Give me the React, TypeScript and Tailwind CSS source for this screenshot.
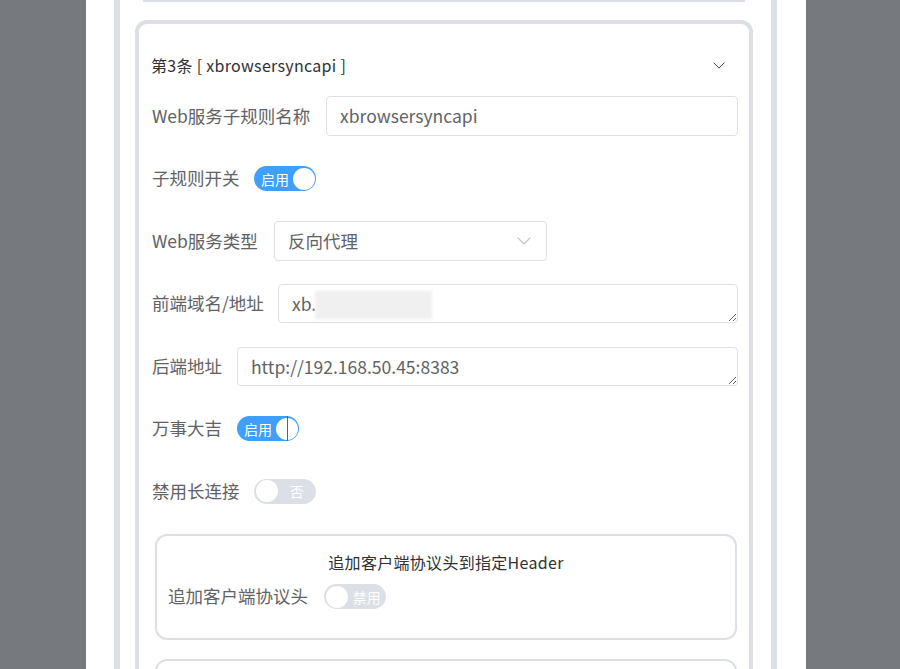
import clsx from "clsx";

function Chevron({ className }: { className?: string }) {
  return (
    <svg viewBox="0 0 14 8" className={className} fill="none" aria-hidden="true">
      <path d="M1 1l6 6 6-6" stroke="currentColor" strokeWidth="1.1" strokeLinecap="round" strokeLinejoin="round" />
    </svg>
  );
}

function Switch({ on, text, caret }: { on: boolean; text: string; caret?: boolean }) {
  if (on) {
    return (
      <div className="relative flex h-[25px] w-[62px] shrink-0 items-center justify-between rounded-full bg-[#409eff] pl-[7px] pr-[1.5px]">
        <span className="text-[14px] leading-none text-white">{text}</span>
        <span className="h-[22px] w-[22px] rounded-full bg-white" />
        {caret && <span className="absolute right-[11px] top-0 h-[25px] w-px bg-[#2a6cc4]" />}
      </div>
    );
  }
  return (
    <div className="flex h-[25px] w-[62px] shrink-0 items-center rounded-full bg-[#dcdfe6] pl-[1.5px]">
      <span className="h-[22px] w-[22px] rounded-full bg-white" />
      <span className="flex-1 text-center text-[14px] leading-none text-white">{text}</span>
    </div>
  );
}

function Row({ label, width, children }: { label: string; width: number; children: React.ReactNode }) {
  return (
    <div className="flex h-[40px] items-center">
      <div className="shrink-0 whitespace-nowrap text-[17.5px] text-[#606266]" style={{ width }}>
        {label}
      </div>
      <div className="ml-[14px] flex flex-1 items-center">{children}</div>
    </div>
  );
}

function Area({ value, blur }: { value: string; blur?: boolean }) {
  return (
    <div className="relative flex-1">
      <textarea
        readOnly
        value={value}
        rows={1}
        className="block h-[39px] w-full rounded-[4px] border border-[#dcdfe6] bg-white px-[13px] py-[5px] text-[17.5px] leading-[27px] text-[#606266] outline-none"
      />
      {blur && <div className="absolute left-[37px] top-[7px] h-[28px] w-[117px] bg-[#f0f0f0] blur-[1.5px]" />}
    </div>
  );
}

export default function App() {
  return (
    <div className="h-[669px] overflow-hidden bg-[#76797e] font-['Noto_Sans_CJK_SC',sans-serif]">
      <div className="ml-[86px] h-full w-[720px] bg-white pl-[28px]">
        <div className="h-full w-[663px] border-x-[6px] border-[#dcdfe6] pl-[15px] pr-[18px]">
          <div className="mx-[8px] h-[2px] bg-[#dcdfe6]" />
          <div className="mt-[18px] rounded-[12px] border-4 border-[#dcdfe6] pt-[17px]">
            <div className="flex h-[48px] items-center justify-between pl-[12px] pr-[24px]">
              <span className="text-[16px] tracking-[0.3px] text-[#303133]">第3条 [ xbrowsersyncapi ]</span>
              <Chevron className="h-[7px] w-[12px] text-[#303133]" />
            </div>
            <div className="mt-[7px] flex flex-col gap-[22.5px] pl-[13px] pr-[11px]">
              <Row label="Web服务子规则名称" width={160}>
                <div className="flex h-[40px] flex-1 items-center rounded-[4px] border border-[#dcdfe6] px-[13px] text-[17.5px] text-[#606266]">
                  xbrowsersyncapi
                </div>
              </Row>
              <Row label="子规则开关" width={88}>
                <Switch on text="启用" />
              </Row>
              <Row label="Web服务类型" width={108}>
                <div className="flex h-[40px] w-[273px] items-center justify-between rounded-[4px] border border-[#dcdfe6] pl-[13px] pr-[15px] text-[17.5px] text-[#606266]">
                  <span>反向代理</span>
                  <Chevron className="h-[8px] w-[14px] text-[#c0c4cc]" />
                </div>
              </Row>
              <Row label="前端域名/地址" width={112}>
                <Area value="xb." blur />
              </Row>
              <Row label="后端地址" width={71}>
                <Area value="http://192.168.50.45:8383" />
              </Row>
              <Row label="万事大吉" width={71}>
                <Switch on text="启用" caret />
              </Row>
              <Row label="禁用长连接" width={88}>
                <Switch on={false} text="否" />
              </Row>
              <div className="ml-[3px] mr-[1px] flex h-[106px] flex-col rounded-[12px] border-2 border-[#dcdfe6] pt-[14px]">
                <div className={clsx("text-center text-[16px] leading-[24px] tracking-[0.3px] text-[#303133]")}>追加客户端协议头到指定Header</div>
                <div className="mt-[10.5px] flex h-[25px] items-center pl-[11px]">
                  <span className="w-[141px] text-[17.5px] text-[#606266]">追加客户端协议头</span>
                  <div className="ml-[15px]">
                    <Switch on={false} text="禁用" />
                  </div>
                </div>
              </div>
              <div className="-mt-[3.5px] ml-[3px] mr-[1px] h-[106px] rounded-[12px] border-2 border-[#dcdfe6]" />
            </div>
          </div>
        </div>
      </div>
    </div>
  );
}
